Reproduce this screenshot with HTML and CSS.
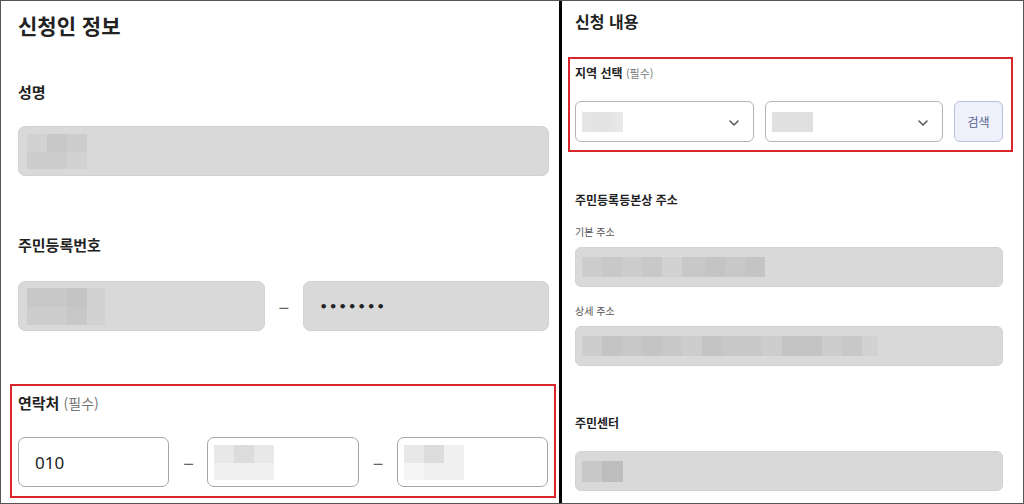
FILE: index.html
```html
<!DOCTYPE html>
<html lang="ko">
<head>
<meta charset="utf-8">
<title>신청서</title>
<link rel="stylesheet" href="styles.css">
</head>
<body>
<div class="frame">
  <section class="panel left">
    <h1 class="title">신청인 정보</h1>

    <div class="field f-name">
      <div class="label">성명</div>
      <div class="box gray">
        <div class="mosaic m-name">
          <div class="row"><i class="g1 w20"></i><i class="g3 w20"></i><i class="g2 w20"></i></div>
          <div class="row"><i class="g2 w20"></i><i class="g2 w20"></i><i class="g1 w20"></i></div>
        </div>
      </div>
    </div>

    <div class="field f-rrn">
      <div class="label">주민등록번호</div>
      <div class="split2">
        <div class="box gray">
          <div class="mosaic m-rrn">
            <div class="row"><i class="g3 w20"></i><i class="g3 w20"></i><i class="g4 w20"></i><i class="g1 w18"></i></div>
            <div class="row"><i class="g2 w20"></i><i class="g2 w20"></i><i class="g3 w20"></i><i class="g1 w18"></i></div>
          </div>
        </div>
        <span class="dash">–</span>
        <div class="box gray"><span class="dots">•••••••</span></div>
      </div>
    </div>

    <div class="field mark f-phone">
      <div class="label">연락처 <span class="req">(필수)</span></div>
      <div class="split3">
        <div class="box white"><span class="val">010</span></div>
        <span class="dash">–</span>
        <div class="box white">
          <div class="mosaic m-phone">
            <div class="row"><i class="l2 w20"></i><i class="l3 w20"></i><i class="l2 w20"></i></div>
            <div class="row"><i class="l1 w20"></i><i class="l1 w20"></i><i class="l1 w20"></i></div>
          </div>
        </div>
        <span class="dash">–</span>
        <div class="box white">
          <div class="mosaic m-phone">
            <div class="row"><i class="l2 w20"></i><i class="l3 w20"></i><i class="l1 w20"></i></div>
            <div class="row"><i class="l0 w20"></i><i class="l1 w20"></i><i class="l1 w20"></i></div>
          </div>
        </div>
      </div>
    </div>
  </section>

  <section class="panel right">
    <h2 class="title sm">신청 내용</h2>

    <div class="field mark r-region">
      <div class="label sm">지역 선택 <span class="req">(필수)</span></div>
      <div class="selects">
        <div class="select">
          <span class="ph ph1"></span>
          <svg class="chev" viewBox="0 0 10 6" width="10" height="6"><path d="M1 1 L5 5 L9 1" fill="none" stroke="#555" stroke-width="1.5" stroke-linecap="round" stroke-linejoin="round"/></svg>
        </div>
        <div class="select">
          <span class="ph ph2"></span>
          <svg class="chev" viewBox="0 0 10 6" width="10" height="6"><path d="M1 1 L5 5 L9 1" fill="none" stroke="#555" stroke-width="1.5" stroke-linecap="round" stroke-linejoin="round"/></svg>
        </div>
        <button class="search" type="button">검색</button>
      </div>
    </div>

    <div class="field r-addr">
      <div class="label sm">주민등록등본상 주소</div>
      <div class="sub">기본 주소</div>
      <div class="box gray sm">
        <div class="mosaic m-addr">
          <div class="row"><i class="g2 w20"></i><i class="g3 w20"></i><i class="g2 w20"></i><i class="g3 w20"></i><i class="g1 w20"></i><i class="g3 w23"></i><i class="g4 w20"></i><i class="g3 w20"></i><i class="g4 w20"></i></div>
        </div>
      </div>
      <div class="sub">상세 주소</div>
      <div class="box gray sm">
        <div class="mosaic m-addr">
          <div class="row"><i class="g2 w20"></i><i class="g4 w20"></i><i class="g3 w20"></i><i class="g4 w20"></i><i class="g3 w20"></i><i class="g2 w20"></i><i class="g4 w20"></i><i class="g3 w20"></i><i class="g3 w20"></i><i class="g2 w20"></i><i class="g4 w20"></i><i class="g4 w20"></i><i class="g2 w20"></i><i class="g3 w20"></i><i class="g1 w16"></i></div>
        </div>
      </div>
    </div>

    <div class="field r-center">
      <div class="label sm">주민센터</div>
      <div class="box gray sm">
        <div class="mosaic m-center">
          <div class="row"><i class="g3 w20"></i><i class="g5 w21"></i></div>
        </div>
      </div>
    </div>
  </section>
</div>
</body>
</html>
```

FILE: styles.css
```css
* { box-sizing: border-box; }
html, body { margin: 0; padding: 0; background: #fff; }
body {
  font-family: "Noto Sans CJK KR", "Noto Sans", sans-serif;
  color: #222;
}
.frame {
  display: flex;
  width: 1024px;
  height: 504px;
  border: 1px solid #555;
  overflow: hidden;
}
.panel { display: flex; flex-direction: column; }
.left {
  width: 558px;
  padding: 9px 10px 0 17px;
}
.right {
  flex: 1;
  border-left: 3px solid #000;
  padding: 8px 20px 0 13px;
}
.title {
  margin: 0;
  font-size: 21px;
  line-height: 30px;
  font-weight: 700;
  color: #222;
}
.title.sm { font-size: 16px; line-height: 24px; }

.label {
  font-size: 15px;
  line-height: 20px;
  font-weight: 700;
  color: #222;
}
.label.sm { font-size: 12px; line-height: 18px; }
.req { font-weight: 400; color: #777; font-size: 14px; }
.label.sm .req { font-size: 11px; }

.box {
  height: 50px;
  border-radius: 7px;
  display: flex;
  align-items: center;
  padding-left: 8px;
}
.box.gray { background: #d9d9d9; border: 1px solid #d2d2d2; }
.box.white { background: #fff; border: 1px solid #a6a6a6; padding-left: 16px; }
.box.sm { height: 40px; border-radius: 6px; padding-left: 6px; }

.f-name { margin-top: 42px; }
.f-name .label { margin-bottom: 24px; }
.f-rrn { margin-top: 59px; }
.f-rrn .label { margin-bottom: 26px; }

.split2 {
  display: grid;
  grid-template-columns: 1fr 10px 1fr;
  column-gap: 14px;
  align-items: center;
}
.split3 {
  display: grid;
  grid-template-columns: 1fr 10px 1fr 10px 1fr;
  column-gap: 14px;
  align-items: center;
}
.dash {
  color: #666;
  font-size: 20px;
  text-align: center;
  line-height: 20px;
}
.dots {
  font-size: 13px;
  letter-spacing: 1.2px;
  color: #222;
  padding-left: 8px;
  font-family: "DejaVu Sans", sans-serif;
  font-weight: 700;
}
.val { font-size: 17px; color: #222; font-family: "Noto Sans", sans-serif; }

.mark { border: 2px solid #d8262c; }
.f-phone {
  margin: 53px -7px 0 -8px;
  padding: 7px 6px 9px 6px;
}
.f-phone .label { margin-bottom: 24px; }

.r-region {
  margin: 24px -10px 0 -7px;
  padding: 5px 8px 8px 5px;
}
.r-region .label { margin-bottom: 19px; }
.selects {
  display: grid;
  grid-template-columns: 1fr 1fr 49px;
  column-gap: 11px;
}
.select {
  height: 41px;
  border: 1px solid #b5b5b5;
  border-radius: 6px;
  background: #fff;
  display: flex;
  align-items: center;
  justify-content: space-between;
  padding: 0 14px 0 6px;
}
.ph { display: block; width: 41px; height: 20px; }
.ph1 { background: linear-gradient(90deg, #e6e6e6, #e2e2e2 50%, #e9e9e9); }
.ph2 { background: #e0e0e0; }
.chev { display: block; margin-top: 2px; }
.search {
  height: 41px;
  border: 1px solid #b9c0d8;
  border-radius: 6px;
  background: #eef0fa;
  color: #56648e;
  font-family: "Noto Sans CJK KR", sans-serif;
  font-size: 12px;
  padding: 0;
}

.r-addr { margin-top: 39px; }
.sub {
  font-size: 10px;
  line-height: 14px;
  color: #555;
  margin: 16px 0 8px;
}
.r-addr .sub + .box + .sub { margin-top: 17px; }
.r-center { margin-top: 48px; }
.r-center .label { margin-bottom: 19px; }

.mosaic { display: flex; flex-direction: column; }
.mosaic .row { display: flex; }
.mosaic i { display: block; }
.m-name .row i { height: 18px; }
.m-name .row + .row i { height: 17px; }
.m-rrn .row i { height: 19px; }
.m-rrn .row + .row i { height: 18px; }
.m-phone { margin-left: -10px; }
.m-phone .row i { height: 18px; }
.m-phone .row + .row i { height: 17px; }
.m-addr .row i { height: 20px; }
.m-center .row i { height: 21px; }

.w16 { width: 16px; } .w18 { width: 18px; } .w20 { width: 20px; }
.w21 { width: 21px; } .w23 { width: 23px; }

.g1 { background: #d2d2d2; }
.g2 { background: #cdcdcd; }
.g3 { background: #c8c8c8; }
.g4 { background: #c4c4c4; }
.g5 { background: #bdbdbd; }
.l0 { background: #f5f5f5; }
.l1 { background: #f0f0f0; }
.l2 { background: #e8e8e8; }
.l3 { background: #dcdcdc; }
```
